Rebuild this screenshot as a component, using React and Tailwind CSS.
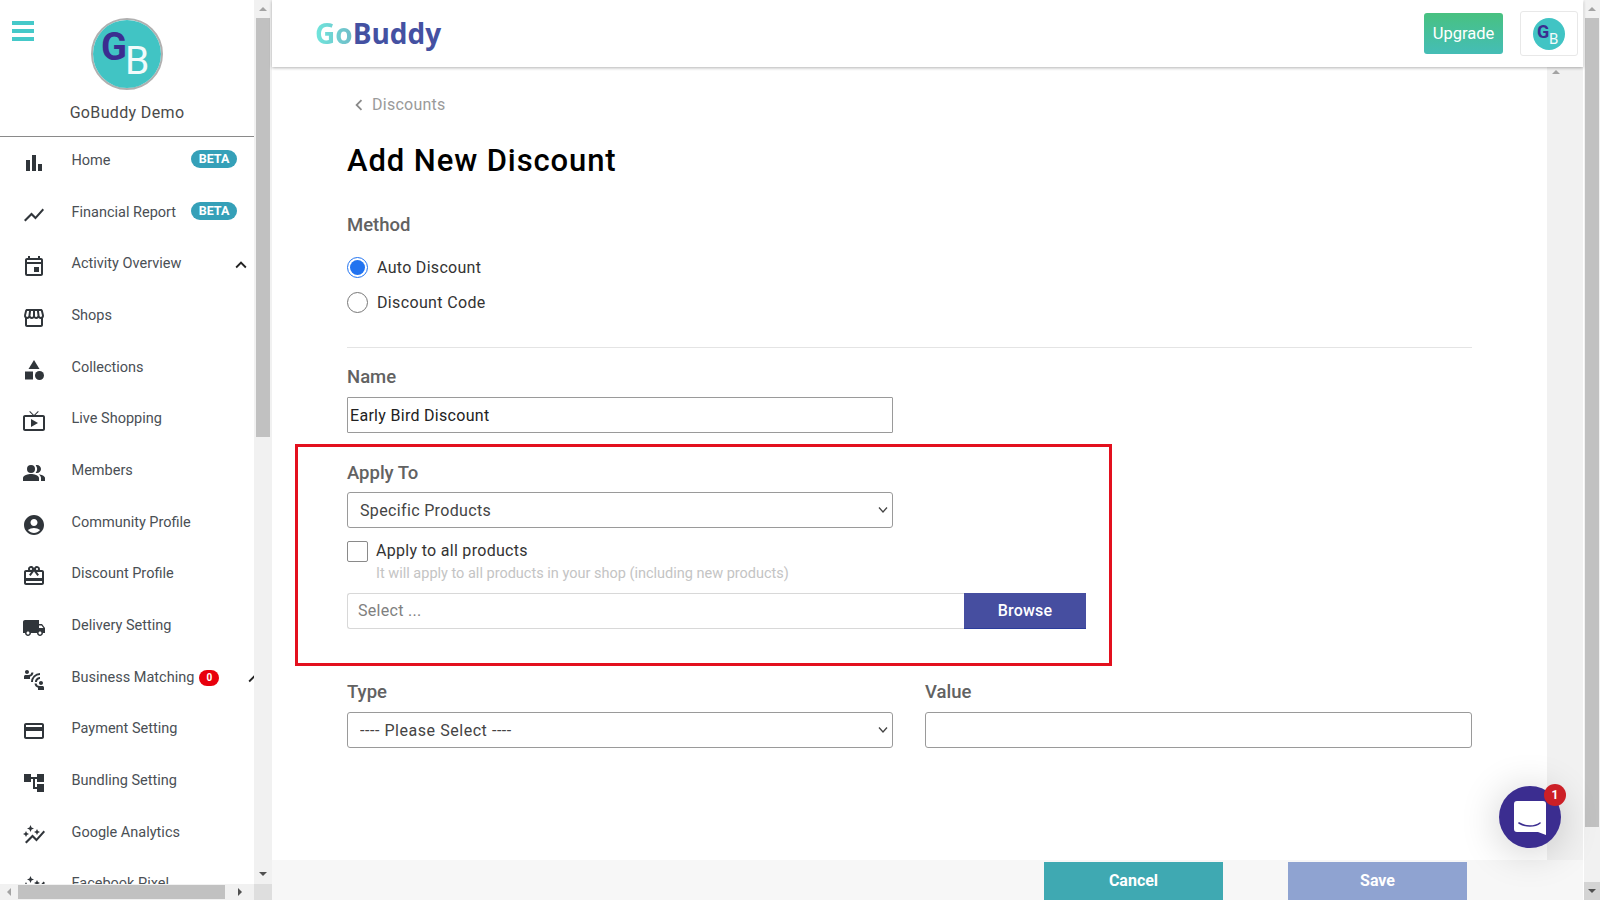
import React from "react";
import {
  MdBarChart, MdShowChart, MdOutlineEvent, MdOutlineStorefront, MdCategory, MdOutlineLiveTv, MdPeopleAlt,
  MdAccountCircle, MdOutlineRedeem, MdLocalShipping, MdOutlineConnectWithoutContact, MdOutlineCreditCard,
  MdAccountTree, MdAutoGraph, MdKeyboardArrowUp, MdChevronLeft,
} from "react-icons/md";

const items = [
  [MdBarChart, "Home", "beta"],
  [MdShowChart, "Financial Report", "beta"],
  [MdOutlineEvent, "Activity Overview", "chev"],
  [MdOutlineStorefront, "Shops"],
  [MdCategory, "Collections"],
  [MdOutlineLiveTv, "Live Shopping"],
  [MdPeopleAlt, "Members"],
  [MdAccountCircle, "Community Profile"],
  [MdOutlineRedeem, "Discount Profile"],
  [MdLocalShipping, "Delivery Setting"],
  [MdOutlineConnectWithoutContact, "Business Matching", "zero"],
  [MdOutlineCreditCard, "Payment Setting"],
  [MdAccountTree, "Bundling Setting"],
  [MdAutoGraph, "Google Analytics"],
  [MdAutoGraph, "Facebook Pixel"],
];

function Tri({ dir, className = "" }) {
  const cls = {
    up: "border-x-[4px] border-x-transparent border-b-[4px] border-b-[#a3a3a3]",
    down: "border-x-[4px] border-x-transparent border-t-[4px] border-t-[#505050]",
    left: "border-y-[4px] border-y-transparent border-r-[4px] border-r-[#a3a3a3]",
    right: "border-y-[4px] border-y-transparent border-l-[4px] border-l-[#505050]",
  }[dir];
  return <span className={`block w-0 h-0 ${cls} ${className}`} />;
}

function Beta() {
  return (
    <span className="ml-auto mr-[17px] -mt-[7px] flex h-[18px] w-[46px] items-center justify-center rounded-full bg-[#35a0b8] text-[12.5px] font-bold text-white">
      BETA
    </span>
  );
}

function Row({ icon: Icon, label, extra }) {
  return (
    <div className="flex h-[51.7px] w-[280px] shrink-0 items-center">
      <div className="flex w-[71.5px] shrink-0 justify-start pl-[22px]">
        <Icon className="text-[24px] text-[#30353a]" />
      </div>
      <span className="-mt-[4px] whitespace-nowrap text-[14.5px] leading-5 text-[#4a4f55]">{label}</span>
      {extra === "beta" && <div className="pointer-events-none absolute left-0 flex w-[254px] justify-end"><Beta /></div>}
      {extra === "chev" && <div className="absolute left-[230px] -mt-[2px]"><MdKeyboardArrowUp className="text-[22px] text-[#222]" /></div>}
      {extra === "zero" && (
        <>
          <span className="ml-[5px] -mt-[4px] flex h-[16px] w-[20px] items-center justify-center rounded-full bg-[#e8000d] text-[10px] font-bold text-white">0</span>
          <div className="absolute left-[243px] -mt-[2px]"><MdKeyboardArrowUp className="text-[22px] text-[#222]" /></div>
        </>
      )}
    </div>
  );
}

function LogoMark({ size, g, b, gl, gt, bl, bt }) {
  return (
    <div className="relative shrink-0 overflow-hidden rounded-full bg-[#41c4c4]" style={{ width: size, height: size }}>
      <span className="absolute font-bold leading-none text-[#3b2d90]" style={{ fontSize: g, left: gl, top: gt }}>G</span>
      <span className="absolute leading-none text-[#f2fbfb]" style={{ fontSize: b, left: bl, top: bt }}>B</span>
    </div>
  );
}

function Label({ children }) {
  return <div className="box-border h-[24px] pt-[1px] text-[18.5px] font-medium leading-6 text-[#626262]">{children}</div>;
}

function Chevron() {
  return (
    <svg className="pointer-events-none absolute right-[5px] top-[14px]" width="10" height="8" viewBox="0 0 10 8">
      <path d="M1 1.5 5 6l4-4.5" fill="none" stroke="#444" strokeWidth="1.3" />
    </svg>
  );
}

function Select({ value, tracking, className = "" }) {
  return (
    <div className={`relative h-[36px] w-[546px] ${className}`}>
      <select defaultValue="v" className={`block h-full w-full appearance-none rounded-[3px] border border-[#9a9a9a] bg-white pl-[12px] pt-[2px] text-[16px] text-[#444] outline-none ${tracking}`}>
        <option value="v">{value}</option>
      </select>
      <Chevron />
    </div>
  );
}

export default function App() {
  return (
    <div className="relative flex h-[900px] w-[1600px] overflow-hidden bg-white font-['Roboto',sans-serif]">
      {/* Sidebar */}
      <aside className="flex h-full w-[272px] shrink-0">
        <div className="flex h-full w-[254px] flex-col">
          <div className="relative h-[137px] shrink-0 border-b border-[#8a8a8a]">
            <div className="absolute left-[12px] top-[21px] flex w-[22px] flex-col gap-[4px]">
              <span className="h-[4px] bg-[#45c9c9]" />
              <span className="h-[4px] bg-[#45c9c9]" />
              <span className="h-[4px] bg-[#45c9c9]" />
            </div>
            <div className="flex flex-col items-center pt-[18px]">
              <div className="rounded-full border-[2px] border-[#b0b0b0]">
                <LogoMark size={68} g={38} b={39} gl={8} gt={8} bl={32} bt={22} />
              </div>
              <div className="mt-[11px] text-[16px] leading-6 tracking-[0.35px] text-[#4a4a4a]">GoBuddy Demo</div>
            </div>
          </div>
          <nav className="relative min-h-0 flex-1 overflow-hidden">
            {items.map(([icon, label, extra]) => (
              <Row key={label} icon={icon} label={label} extra={extra} />
            ))}
          </nav>
          <div className="flex h-[16px] shrink-0 items-center bg-[#f1f1f1]">
            <div className="flex w-[18px] justify-center"><Tri dir="left" /></div>
            <div className="h-[14px] w-[207px] bg-[#c1c1c1]" />
            <div className="flex flex-1 justify-center"><Tri dir="right" /></div>
          </div>
        </div>
        <div className="flex h-full w-[18px] flex-col items-center bg-[#f1f1f1]">
          <div className="flex h-[18px] items-center"><Tri dir="up" /></div>
          <div className="h-[419px] w-[14px] bg-[#c1c1c1]" />
          <div className="flex-1" />
          <div className="mb-[8px]"><Tri dir="down" /></div>
          <div className="h-[16px] w-full bg-[#dedede]" />
        </div>
      </aside>

      {/* Center */}
      <div className="flex h-full w-[1311px] shrink-0 flex-col">
        <header className="relative z-10 flex h-[67px] shrink-0 items-center bg-white pl-[43px] pr-[3px] shadow-[0_1px_3px_rgba(0,0,0,0.3)]">
          <div className="-mt-[2px] font-['Open_Sans',sans-serif] text-[28px] font-bold leading-none">
            <span className="bg-gradient-to-r from-[#6fe6dc] to-[#6fbcc8] bg-clip-text text-transparent">Go</span>
            <span className="text-[#4451a2]">Buddy</span>
          </div>
          <button className="ml-auto flex h-[41px] w-[79px] items-center justify-center rounded-[3px] bg-gradient-to-b from-[#48c180] to-[#45bdb6] pt-[1px] text-[16.5px] text-white">
            Upgrade
          </button>
          <div className="ml-[17px] mr-[2px] flex h-[45px] w-[58px] items-center justify-center rounded-[3px] border border-[#e8e8e8] bg-white">
            <LogoMark size={32} g={18} b={15} gl={4} gt={5} bl={16} bt={14} />
          </div>
        </header>

        <div className="flex min-h-0 flex-1">
          <main className="w-[1275px] shrink-0 pl-[75px] pr-[75px]">
            <div className="mt-[26px] flex h-[24px] items-center text-[16px] text-[#9a9a9a]">
              <MdChevronLeft className="ml-[1px] text-[22px] text-[#8a8a8a]" />
              <span className="ml-[2px] tracking-[0.25px]">Discounts</span>
            </div>
            <h1 className="mt-[24px] text-[31px] font-medium leading-[40px] tracking-[0.9px] text-black">Add New Discount</h1>
            <div className="mt-[31px]"><Label>Method</Label></div>
            <div className="mt-[21px] flex h-[22px] items-center gap-[9px]">
              <span className="-mt-[1px] flex h-[21px] w-[21px] items-center justify-center rounded-full border border-[#2173f0]">
                <span className="h-[15px] w-[15px] rounded-full bg-[#2173f0]" />
              </span>
              <span className="text-[16px] tracking-[0.3px] text-[#333]">Auto Discount</span>
            </div>
            <div className="mt-[13px] flex h-[22px] items-center gap-[9px]">
              <span className="-mt-[1px] h-[21px] w-[21px] rounded-full border border-[#777]" />
              <span className="text-[16px] tracking-[0.35px] text-[#333]">Discount Code</span>
            </div>
            <hr className="mt-[33px] border-[#e4e4e4]" />

            <div className="mt-[16px]"><Label>Name</Label></div>
            <input readOnly value="Early Bird Discount" className="mt-[9px] block h-[36px] w-[546px] rounded-[1px] border border-[#9a9a9a] px-[2px] pt-[1px] text-[16px] tracking-[0.3px] text-[#222] outline-none" />

            <section className="-ml-[52px] mt-[11px] h-[222px] w-[817px] border-[3px] border-[#e3101e] pl-[49px] pr-[23px] pt-[13px]">
              <Label>Apply To</Label>
              <Select value="Specific Products" tracking="tracking-[0.35px]" className="mt-[8px]" />
              <div className="mt-[12px] flex h-[22px] items-center gap-[8px]">
                <span className="h-[21px] w-[21px] rounded-[2px] border border-[#8a8a8a]" />
                <span className="text-[16px] tracking-[0.3px] text-[#333]">Apply to all products</span>
              </div>
              <div className="mt-[2px] whitespace-nowrap pl-[29px] text-[14.5px] leading-5 text-[#c4c4c4]">It will apply to all products in your shop (including new products)</div>
              <div className="mt-[9px] flex h-[36px] w-[739px]">
                <div className="flex flex-1 items-center rounded-l-[3px] border border-r-0 border-[#d8d8d8] pl-[10px] text-[16px] tracking-[0.3px] text-[#808080]">Select ...</div>
                <button className="h-full w-[122px] border-b border-[#2a3c9c] bg-[#464ea0] text-[16px] font-medium tracking-[0.2px] text-white">Browse</button>
              </div>
            </section>

            <div className="mt-[13px] flex gap-[32px]">
              <div className="w-[546px]">
                <Label>Type</Label>
                <Select value="---- Please Select ----" tracking="tracking-[0.55px]" className="mt-[9px]" />
              </div>
              <div className="w-[547px]">
                <Label>Value</Label>
                <input readOnly className="mt-[9px] block h-[36px] w-full rounded-[3px] border border-[#9a9a9a] outline-none" />
              </div>
            </div>
          </main>
          <div className="flex w-[36px] shrink-0 flex-col items-start bg-[#f1f1f1] pl-[5px] pt-[3px]">
            <Tri dir="up" />
          </div>
        </div>

        <footer className="flex h-[40px] shrink-0 items-end bg-[#f7f7f7]">
          <button className="ml-[772px] h-[38px] w-[179px] bg-[#3fa9b2] text-[16px] font-bold text-white">Cancel</button>
          <button className="ml-[65px] h-[38px] w-[179px] bg-[#8fa3d1] text-[16px] font-bold text-white">Save</button>
        </footer>
      </div>

      {/* Page scrollbar */}
      <div className="ml-[1px] flex h-full w-[16px] shrink-0 flex-col items-center bg-[#f1f1f1]">
        <div className="flex h-[18px] items-center"><Tri dir="up" /></div>
        <div className="h-[809px] w-[14px] bg-[#c1c1c1]" />
        <div className="flex-1" />
        <div className="flex h-[18px] w-full items-center justify-center bg-[#d4d4d4]"><Tri dir="down" /></div>
      </div>

      {/* Chat launcher */}
      <div className="absolute left-[1499px] top-[786px] h-[62px] w-[62px] rounded-full bg-[#3b2d90] shadow-[0_4px_40px_rgba(0,0,0,0.2)]">
        <svg className="absolute left-[15px] top-[15px]" width="32" height="34" viewBox="0 0 32 34">
          <path d="M3 0h26a3 3 0 0 1 3 3v31l-8-3H3a3 3 0 0 1-3-3V3a3 3 0 0 1 3-3z" fill="#fff" />
          <path d="M5 22c6 4 16 4 21 0" fill="none" stroke="#3b2d90" strokeWidth="1.6" strokeLinecap="round" />
        </svg>
        <span className="absolute -right-[5px] -top-[2px] flex h-[22px] w-[22px] items-center justify-center rounded-full bg-[#cc1f26] text-[12px] font-bold text-white">1</span>
      </div>
    </div>
  );
}
